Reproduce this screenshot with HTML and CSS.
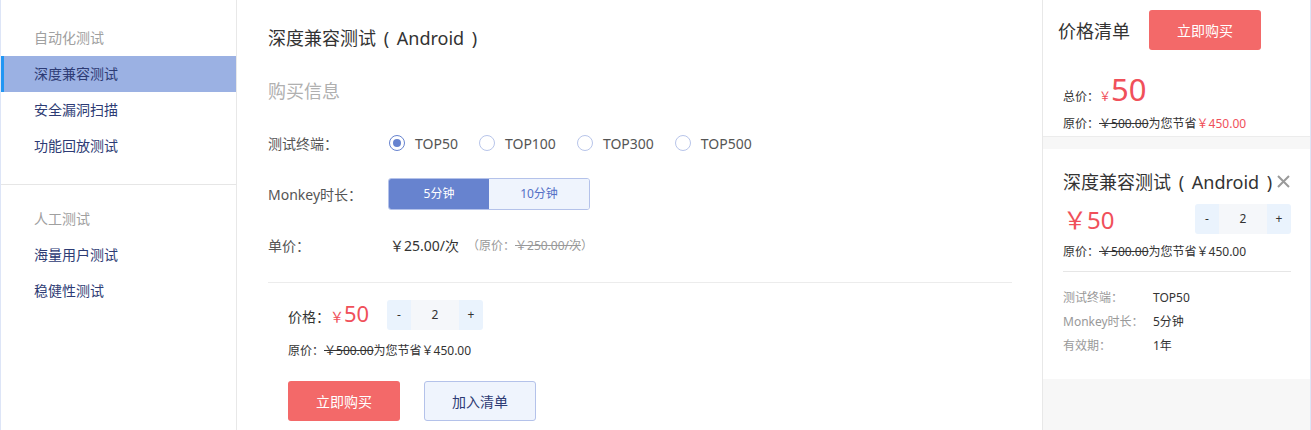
FILE: index.html
```html
<!DOCTYPE html>
<html lang="zh-CN">

<head>
  <meta charset="UTF-8" />
  <meta name="viewport" content="width=device-width, initial-scale=1.0" />
  <title>深度兼容测试 - 购买</title>
  <link rel="stylesheet" href="styles.css">
</head>

<body>
  <div class="page">
    <aside class="sidebar">
      <div class="nav-group">
        <div class="nav-title">自动化测试</div>
        <div class="nav-item active">深度兼容测试</div>
        <div class="nav-item">安全漏洞扫描</div>
        <div class="nav-item">功能回放测试</div>
      </div>
      <div class="nav-group">
        <div class="nav-title">人工测试</div>
        <div class="nav-item">海量用户测试</div>
        <div class="nav-item">稳健性测试</div>
      </div>
    </aside>

    <main class="main">
      <h1 class="page-title">深度兼容测试 ( Android )</h1>
      <h2 class="section-title">购买信息</h2>

      <div class="form-row">
        <div class="form-label">测试终端：</div>
        <div class="radio-group">
          <label class="radio checked"><span class="radio-dot"></span>TOP50</label>
          <label class="radio"><span class="radio-dot"></span>TOP100</label>
          <label class="radio"><span class="radio-dot"></span>TOP300</label>
          <label class="radio"><span class="radio-dot"></span>TOP500</label>
        </div>
      </div>

      <div class="form-row">
        <div class="form-label">Monkey时长：</div>
        <div class="segment">
          <div class="segment-item selected">5分钟</div>
          <div class="segment-item">10分钟</div>
        </div>
      </div>

      <div class="form-row">
        <div class="form-label">单价：</div>
        <div class="unit-price">￥25.00/次</div>
        <div class="unit-orig">（原价：<span class="strike">￥250.00/次</span>）</div>
      </div>

      <div class="order">
        <div class="order-row">
          <div class="order-price">价格：<span class="red">￥</span><span class="red big">50</span></div>
          <div class="stepper">
            <span class="step-btn">-</span>
            <span class="step-val">2</span>
            <span class="step-btn">+</span>
          </div>
        </div>
        <div class="orig-line">原价：<span class="strike">￥500.00</span>为您节省￥450.00</div>
        <div class="actions">
          <button class="btn btn-primary">立即购买</button>
          <button class="btn btn-plain">加入清单</button>
        </div>
      </div>
    </main>

    <aside class="cart">
      <div class="cart-summary">
        <div class="cart-head">
          <div class="cart-title">价格清单</div>
          <button class="btn btn-primary">立即购买</button>
        </div>
        <div class="total">总价：<span class="red">￥</span><span class="red total-num">50</span></div>
        <div class="orig-line">原价：<span class="strike">￥500.00</span>为您节省<span class="red">￥450.00</span></div>
      </div>

      <div class="cart-card">
        <div class="card-head">
          <div class="card-title">深度兼容测试 ( Android )</div>
          <svg class="close" width="13" height="13" viewBox="0 0 13 13">
            <path d="M1 1 L12 12 M12 1 L1 12" stroke="#9a9a9a" stroke-width="2" fill="none" />
          </svg>
        </div>
        <div class="card-price-row">
          <div class="card-price">￥50</div>
          <div class="stepper">
            <span class="step-btn">-</span>
            <span class="step-val">2</span>
            <span class="step-btn">+</span>
          </div>
        </div>
        <div class="orig-line">原价：<span class="strike">￥500.00</span>为您节省￥450.00</div>
        <div class="card-details">
          <div class="detail-row"><span class="detail-key">测试终端：</span><span>TOP50</span></div>
          <div class="detail-row"><span class="detail-key">Monkey时长：</span><span>5分钟</span></div>
          <div class="detail-row"><span class="detail-key">有效期：</span><span>1年</span></div>
        </div>
      </div>
    </aside>
  </div>
</body>

</html>
```

FILE: styles.css
```css
body {
  margin: 0;
  font-family: "Noto Sans", "Noto Sans CJK SC", sans-serif;
  color: #333;
  background: #fff;
  overflow: hidden;
}

.page {
  display: flex;
  height: 430px;
  border-left: 1px solid #dde5f7;
  border-right: 1px solid #dde5f7;
}

/* left navigation */
.sidebar {
  width: 235px;
  flex-shrink: 0;
  border-right: 1px solid #e8e8e8;
}

.nav-group {
  padding: 20px 0;
}

.nav-group + .nav-group {
  border-top: 1px solid #e6e6e6;
  padding-top: 16px;
}

.nav-title,
.nav-item {
  height: 36px;
  line-height: 36px;
  padding-left: 33px;
  font-size: 14px;
}

.nav-title {
  color: #a0a0a0;
}

.nav-item {
  color: #2d3b74;
}

.nav-item.active {
  background: #9bb1e3;
  box-shadow: inset 3px 0 0 #2196f3;
}

/* main column */
.main {
  flex: 1;
  padding: 0 30px 0 31px;
  border-right: 1px solid #e8e8e8;
}

.page-title {
  margin: 26px 0 0;
  font-size: 18px;
  font-weight: normal;
  line-height: 24px;
  word-spacing: 3px;
  color: #333;
}

.section-title {
  margin: 29px 0 24px;
  font-size: 18px;
  font-weight: normal;
  line-height: 24px;
  color: #b0b0b0;
}

.form-row {
  display: flex;
  align-items: center;
  height: 32px;
  margin-bottom: 19px;
  font-size: 14px;
}

.form-label {
  width: 120px;
  color: #555;
}

.radio-group {
  display: flex;
  align-items: center;
}

.radio {
  display: flex;
  align-items: center;
  margin-right: 20px;
  color: #555;
}

.radio-dot {
  width: 14px;
  height: 14px;
  border: 1px solid #b8c5ea;
  border-radius: 50%;
  margin: 0 10px 0 1px;
  display: flex;
  align-items: center;
  justify-content: center;
}

.radio.checked .radio-dot {
  border-color: #6783cf;
}

.radio.checked .radio-dot::after {
  content: "";
  width: 8px;
  height: 8px;
  border-radius: 50%;
  background: #6783cf;
}

.segment {
  display: flex;
  border: 1px solid #b4c2ea;
  border-radius: 3px;
  overflow: hidden;
}

.segment-item {
  width: 100px;
  height: 30px;
  line-height: 30px;
  text-align: center;
  font-size: 12px;
  background: #eff4fd;
  color: #5470c6;
}

.segment-item.selected {
  background: #6783cf;
  color: #fff;
}

.unit-price {
  margin-left: 2px;
  color: #333;
}

.unit-orig {
  margin-left: 8px;
  font-size: 12px;
  color: #999;
}

.strike {
  text-decoration: line-through;
}

.red {
  color: #f0505a;
}

.order {
  border-top: 1px solid #ececec;
  margin-top: 21px;
  padding: 17px 0 0 20px;
}

.order-row {
  display: flex;
  align-items: center;
  height: 30px;
}

.order-price {
  width: 99px;
  line-height: 24px;
  font-size: 14px;
  color: #333;
}

.order-price .big {
  font-size: 22px;
}

.stepper {
  display: flex;
  height: 30px;
  line-height: 30px;
  font-size: 12px;
  color: #333;
  border-radius: 3px;
  overflow: hidden;
}

.step-btn {
  width: 24px;
  text-align: center;
  background: #eaf3fd;
}

.step-val {
  width: 48px;
  text-align: center;
  background: #f5f7fa;
}

.orig-line {
  font-size: 12px;
  line-height: 18px;
  color: #333;
}

.order .orig-line {
  margin-top: 12px;
}

.actions {
  display: flex;
  gap: 24px;
  margin-top: 21px;
}

.btn {
  width: 112px;
  height: 40px;
  border-radius: 3px;
  font-family: inherit;
  font-size: 14px;
  cursor: pointer;
}

.btn-primary {
  background: #f36969;
  border: none;
  color: #fff;
}

.btn-plain {
  background: #eff4fd;
  border: 1px solid #b4c2ea;
  color: #2d3b74;
}

/* right price list */
.cart {
  width: 267px;
  flex-shrink: 0;
  background: #f7f7f7;
}

.cart-summary {
  background: #fff;
  height: 137px;
  border-bottom: 1px solid #ececec;
  padding-left: 20px;
  box-sizing: border-box;
}

.cart-head {
  display: flex;
  align-items: center;
  padding-top: 10px;
  margin-left: -5px;
  gap: 19px;
}

.cart-title {
  font-size: 18px;
  color: #333;
}

.total {
  margin-top: 18px;
  height: 38px;
  font-size: 12px;
  color: #333;
}

.total-num {
  font-size: 31px;
}

.cart-summary .orig-line {
  margin-top: 9px;
}

.cart-card {
  background: #fff;
  margin-top: 12px;
  padding: 20px 19px 21px 20px;
}

.card-head {
  display: flex;
  align-items: center;
  justify-content: space-between;
  height: 24px;
}

.card-title {
  font-size: 18px;
  word-spacing: 3px;
  color: #333;
}

.close {
  margin-right: 1px;
}

.card-price-row {
  display: flex;
  align-items: center;
  justify-content: space-between;
  margin-top: 8px;
}

.card-price {
  font-size: 24px;
  color: #f0505a;
}

.cart-card .orig-line {
  margin-top: 7px;
  padding-bottom: 10px;
  border-bottom: 1px solid #e6e6e6;
}

.card-details {
  padding-top: 14px;
}

.detail-row {
  display: flex;
  height: 24px;
  line-height: 24px;
  font-size: 12px;
  color: #333;
}

.detail-key {
  width: 90px;
  color: #999;
}
```
